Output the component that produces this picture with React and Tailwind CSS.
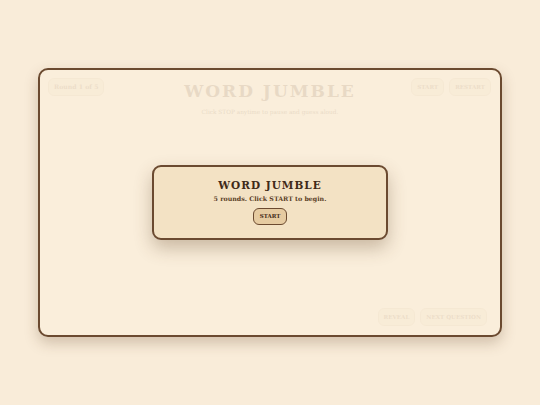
const serif = { fontFamily: '"DejaVu Serif", "Liberation Serif", serif' };

function Ghost({ children, className = '' }) {
    return (
        <span className={`rounded-md border border-[#d9c3a0] bg-[#f0dfc2] px-[5px] text-[5.6px] font-bold text-[#8a6a45] leading-[16px] whitespace-nowrap ${className}`}>
            {children}
        </span>
    );
}

export default function App() {
    return (
        <div className="w-[540px] h-[405px] flex items-center justify-center bg-[#f9ecd9]" style={serif}>
            <div className="relative w-[464px] h-[269px] rounded-[10px] border-2 border-[#6b4a30] bg-[#faeedb] shadow-[0_6px_14px_rgba(90,60,30,0.25)]">
                {/* contenido de fondo atenuado */}
                <div className="h-full flex flex-col px-[8px] pt-[8px] pb-[8px] opacity-[0.12]">
                    <div className="relative flex items-start justify-between">
                        <Ghost className="text-[6.2px]">Round 1 of 5</Ghost>
                        <div className="absolute left-0 right-0 top-[5px] flex flex-col items-center">
                            <div className="text-[17px] font-bold tracking-[2px] text-[#6b4a30] leading-none">WORD JUMBLE</div>
                            <div className="mt-[8px] text-[5.8px] text-[#6b4a30]">Click STOP anytime to pause and guess aloud.</div>
                        </div>
                        <div className="flex gap-[5px] pr-[1px]">
                            <Ghost>START</Ghost>
                            <Ghost>RESTART</Ghost>
                        </div>
                    </div>
                    <div className="flex-1" />
                    <div className="flex justify-end gap-[5px] pr-[5px] pb-[1px]">
                        <Ghost>REVEAL</Ghost>
                        <Ghost>NEXT QUESTION</Ghost>
                    </div>
                </div>

                {/* modal */}
                <div className="absolute inset-0 flex items-center justify-center">
                    <div className="w-[236px] h-[75px] rounded-[9px] border-2 border-[#6b4a30] bg-[#f3e2c4] shadow-[0_8px_18px_rgba(90,60,30,0.3)] flex flex-col items-center pt-[13px]">
                        <div className="text-[10.5px] font-bold tracking-[1px] text-[#3f2a18] leading-none">WORD JUMBLE</div>
                        <div className="mt-[5px] text-[6.3px] font-bold text-[#5a3e26] leading-none">5 rounds. Click START to begin.</div>
                        <button className="mt-[6px] h-[17px] px-[6px] rounded-[6px] border border-[#6b4a30] bg-[#e6cba1] text-[5.5px] font-bold text-[#3f2a18]">
                            START
                        </button>
                    </div>
                </div>
            </div>
        </div>
    );
}
